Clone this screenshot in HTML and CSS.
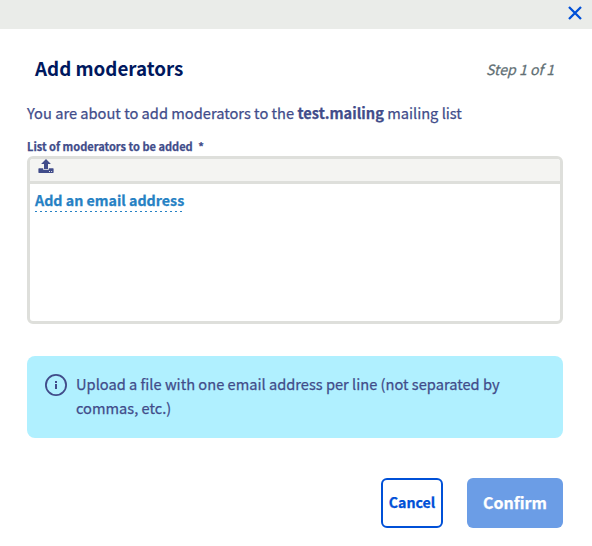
FILE: index.html
```html
<!DOCTYPE html>
<html lang="en">
<head>
<meta charset="utf-8">
<title>Add moderators</title>
<link rel="stylesheet" href="styles.css">
</head>
<body>
<div class="modal">
  <div class="topbar">
    <button class="close" aria-label="Close">
      <svg width="14" height="14" viewBox="0 0 14 14"><path d="M1 1 13 13M13 1 1 13" fill="none" stroke="#0050d7" stroke-width="2.3"/></svg>
    </button>
  </div>
  <header class="header">
    <h1 class="title">Add moderators</h1>
    <span class="step">Step 1 of 1</span>
  </header>
  <main class="content">
    <p class="intro">You are about to add moderators to the <strong>test.mailing</strong> mailing list</p>
    <div class="label">List of moderators to be added <span class="required">*</span></div>
    <div class="editor">
      <div class="toolbar">
        <svg width="16" height="15" viewBox="0 0 16 15" fill="#414c8a"><path d="M8 0 12.9 5H10V10H6V5H3.1Z"/><path fill-rule="evenodd" d="M1 9.2H5.2V10.7H10.8V9.2H15Q15.6 9.2 15.6 9.9V13.3Q15.6 14 15 14H1Q.4 14 .4 13.3V9.9Q.4 9.2 1 9.2ZM11 12V12.9H11.9V12ZM13.2 12V12.9H14.1V12Z"/></svg>
      </div>
      <div class="addresses"><a class="add">Add an email address</a></div>
    </div>
    <div class="info">
      <svg class="info-icon" width="22" height="22" viewBox="0 0 22 22"><circle cx="11" cy="11" r="10.1" fill="none" stroke="#414c8a" stroke-width="1.8"/><path d="M10 7H12V9H10ZM10 10H12V15H10Z" fill="#414c8a"/></svg>
      <p class="info-text">Upload a file with one email address per line (not separated by<br>commas, etc.)</p>
    </div>
  </main>
  <footer class="actions">
    <button class="button cancel">Cancel</button>
    <button class="button confirm">Confirm</button>
  </footer>
</div>
</body>
</html>
```
FILE: styles.css
```css
* { box-sizing: border-box; }
body {
  margin: 0;
  background: #fff;
  color: #414c8a;
  font-family: "Noto Sans CJK SC", "Open Sans", sans-serif;
  font-size: 14.65px;
  line-height: 24px;
  -webkit-text-stroke: 0.25px currentColor;
}
h1, p { margin: 0; }
button { font-family: inherit; padding: 0; }
svg { display: block; }
.modal { width: 592px; height: 546px; overflow: hidden; }
.topbar {
  height: 29px;
  background: #eaece9;
  display: flex;
  justify-content: flex-end;
  padding: 6px 10px 0 0;
}
.close { border: 0; background: none; width: 14px; height: 14px; }
.header {
  display: flex;
  align-items: center;
  justify-content: space-between;
  height: 24px;
  margin: 27px 38px 0 35px;
}
.title { color: #00185e; font-size: 18.8px; font-weight: 700; line-height: 24px; -webkit-text-stroke: 0; }
.step { color: #616f74; font-size: 14.1px; font-style: italic; padding-top: 1px; }
.content { margin: 21px 29px 0 27px; }
.label { margin-top: 14px; font-size: 11.05px; font-weight: 700; line-height: 15px; height: 17px; }
.required { margin-left: 3px; }
.editor {
  height: 168px;
  border: 3px solid #dedfdb;
  border-radius: 6px;
  overflow: hidden;
}
.toolbar {
  height: 25px;
  background: #f4f4f2;
  border-bottom: 3px solid #dedfdb;
  padding: 0 0 0 8px;
}
.addresses { padding: 6px 5px; display: flex; }
.add {
  color: #2681c4;
  font-size: 14.25px;
  font-weight: 700;
  height: 22px;
  line-height: 19px;
  background: repeating-linear-gradient(90deg, #2681c4 0 2px, transparent 2px 5px) 0 100% / 100% 1px no-repeat;
}
.info {
  display: flex;
  gap: 9px;
  height: 82px;
  margin-top: 32px;
  padding: 16px 18px;
  border-radius: 8px;
  background: #b0f0ff;
}
.info-icon { flex: none; margin-top: 2px; }
.info-text { white-space: nowrap; }
.actions {
  display: flex;
  justify-content: flex-end;
  gap: 24px;
  margin: 40px 29px 0 0;
}
.button { height: 50px; border-radius: 6px; font-weight: 700; -webkit-text-stroke: 0.25px currentColor; }
.cancel { width: 62px; border: 2px solid #0050d7; background: #fff; color: #0050d7; font-size: 14.2px; padding-bottom: 2px; }
.confirm { width: 96px; border: 0; background: #6b9de6; color: #fff; font-size: 16px; padding-bottom: 3px; }
```
